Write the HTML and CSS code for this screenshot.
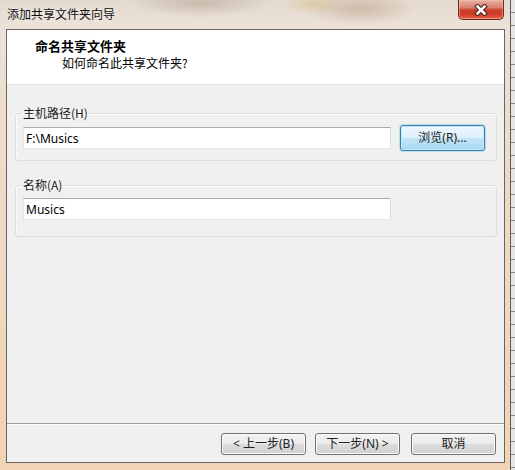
FILE: index.html
```html
<!DOCTYPE html>
<html lang="zh-CN">
<head>
<meta charset="utf-8">
<title>添加共享文件夹向导</title>
<link rel="stylesheet" href="styles.css">
</head>
<body>
<div class="screen">
  <div class="window">
    <div class="titlebar">
      <span class="title-text">添加共享文件夹向导</span>
      <button class="close-btn" type="button" aria-label="关闭">
        <svg width="14" height="12" viewBox="0 0 14 12">
          <path d="M3.5 2.5 L10.5 9.5 M10.5 2.5 L3.5 9.5" stroke="#4a1d14" stroke-width="4.6" stroke-linecap="square" fill="none"/>
          <path d="M3.5 2.5 L10.5 9.5 M10.5 2.5 L3.5 9.5" stroke="#ffffff" stroke-width="2.6" stroke-linecap="square" fill="none"/>
        </svg>
      </button>
    </div>
    <div class="client">
      <div class="header">
        <div class="header-title">命名共享文件夹</div>
        <div class="header-sub">如何命名此共享文件夹?</div>
      </div>
      <div class="body">
        <fieldset class="group group-path">
          <legend class="group-label">主机路径(H)</legend>
          <div class="row">
            <input class="textbox" type="text" value="F:\Musics">
            <button class="btn btn-default" type="button">浏览(R)...</button>
          </div>
        </fieldset>
        <fieldset class="group group-name">
          <legend class="group-label">名称(A)</legend>
          <div class="row">
            <input class="textbox" type="text" value="Musics">
          </div>
        </fieldset>
      </div>
      <div class="footer">
        <button class="btn" type="button">&lt; 上一步(B)</button>
        <button class="btn" type="button">下一步(N) &gt;</button>
        <button class="btn btn-cancel" type="button">取消</button>
      </div>
    </div>
  </div>
  <div class="behind"></div>
</div>
</body>
</html>
```

FILE: styles.css
```css
* { box-sizing: border-box; }

html, body {
  margin: 0;
  padding: 0;
}

body {
  width: 515px;
  height: 470px;
  overflow: hidden;
  font-family: "Noto Sans", "Noto Sans CJK SC", sans-serif;
  font-size: 12px;
  color: #000;
}

.screen {
  display: flex;
  width: 515px;
  height: 470px;
}

.window {
  width: 511px;
  height: 470px;
  display: flex;
  flex-direction: column;
  padding: 0 5px 7px 6px;
  border-right: 1px solid #5e5a56;
  background:
    radial-gradient(ellipse 70px 14px at 200px 3px, rgba(150, 130, 110, 0.35), transparent),
    radial-gradient(ellipse 55px 16px at 360px 9px, rgba(165, 125, 90, 0.35), transparent),
    radial-gradient(ellipse 30px 10px at 312px 4px, rgba(215, 180, 90, 0.35), transparent),
    linear-gradient(to bottom, #e3d9cf 0px, #ece2d8 28px, #eedccb 120px, #f2d3b5 100%);
}

.titlebar {
  height: 29px;
  flex: none;
  display: flex;
  justify-content: space-between;
  align-items: flex-start;
  padding-left: 1px;
}

.title-text {
  font-family: "Noto Sans CJK SC", sans-serif;
  font-size: 12px;
  line-height: 28px;
  color: #111;
  text-shadow: 0 0 6px rgba(255, 255, 255, 0.9);
}

.close-btn {
  width: 46px;
  height: 20px;
  margin: 0 1px 0 0;
  padding: 0;
  border: 1px solid #6a2a1f;
  border-top: none;
  border-radius: 0 0 5px 5px;
  display: flex;
  align-items: center;
  justify-content: center;
  background: linear-gradient(to bottom, #e8b0a2 0%, #d9806f 40%, #c8402e 52%, #cf3a26 75%, #e36a4c 100%);
  box-shadow: inset 0 0 0 1px rgba(255, 200, 180, 0.45);
}

.client {
  flex: 1;
  display: flex;
  flex-direction: column;
  border: 1px solid #6b6460;
  background: #f0f0f0;
}

.header {
  height: 55px;
  flex: none;
  background: #ffffff;
  border-bottom: 1px solid #e4e4e4;
  padding: 8px 0 0 28px;
  font-family: "Noto Sans CJK SC", sans-serif;
}

.header-title {
  font-weight: bold;
  font-size: 13px;
  line-height: 16px;
}

.header-sub {
  font-size: 12px;
  line-height: 16px;
  margin-top: 1px;
  padding-left: 27px;
}

.body {
  flex: 1;
  padding: 20px 7px 0 8px;
}

.group {
  margin: 0;
  border: 1px solid #d9dfe3;
  border-radius: 3px;
  box-shadow: inset 1px 1px 0 #fafafa;
  padding: 4px 7px 9px;
  min-width: 0;
}

.group-name {
  margin-top: 16px;
  padding-top: 5px;
  padding-bottom: 16px;
}

.group-label {
  font-family: "Noto Sans CJK SC", sans-serif;
  font-size: 12px;
  line-height: 16px;
  padding: 0 1px;
  margin-left: -1px;
  color: #1a1a1a;
}

.row {
  display: flex;
  align-items: center;
  gap: 9px;
}

.textbox {
  width: 368px;
  height: 22px;
  margin: 0;
  padding: 0 0 0 2px;
  border: 1px solid;
  border-color: #abadb3 #dbdfe6 #e3e9ef #e2e3ea;
  background: #ffffff;
  font-family: "Noto Sans", "Noto Sans CJK SC", sans-serif;
  font-size: 12px;
  color: #000;
  outline: none;
}

.btn {
  width: 85px;
  height: 22px;
  margin: 0;
  padding: 0;
  border: 1px solid #707070;
  border-radius: 3px;
  background: linear-gradient(to bottom, #f2f2f2 0%, #ebebeb 48%, #dddddd 52%, #cfcfcf 100%);
  box-shadow: inset 0 0 0 1px #fbfbfb;
  font-family: "Noto Sans", "Noto Sans CJK SC", sans-serif;
  font-size: 12px;
  line-height: 18px;
  color: #222;
}

.btn-default {
  height: 26px;
  border: 1px solid #3c7fb1;
  background: linear-gradient(to bottom, #edf7fd 0%, #dcf0fb 48%, #c2e5f8 52%, #aad8f1 100%);
  box-shadow: inset 0 0 0 1px #bfeaf9, 0 0 1px 1px rgba(90, 180, 220, 0.35);
}

.footer {
  flex: none;
  display: flex;
  justify-content: flex-end;
  gap: 9px;
  padding: 9px 8px 7px 0;
  border-top: 1px solid #a0a0a0;
  box-shadow: inset 0 1px 0 #ffffff;
}

.btn-cancel {
  margin-left: 2px;
}

.behind {
  width: 4px;
  height: 470px;
  background:
    repeating-linear-gradient(to bottom, #e6e6e6 0px, #e6e6e6 12px, #8a8a8a 12px, #8a8a8a 13px);
}
```
